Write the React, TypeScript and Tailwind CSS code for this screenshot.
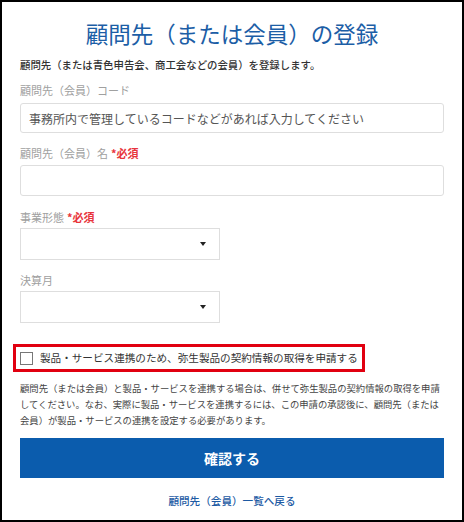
import { useState } from 'react';

const FONT = { fontFamily: '"Noto Sans CJK JP", "Noto Sans", sans-serif' };

function Label({ text, required, className }: { text: string; required?: boolean; className: string }) {
  return (
    <div className={`text-[11px] leading-[14px] text-[#a0a0a0] ${className}`}>
      {text}
      {required && <span className="ml-[3px] font-bold text-[#e8343c]">*必須</span>}
    </div>
  );
}

function SelectBox({ className }: { className: string }) {
  return (
    <div className={`flex h-[32px] w-[200px] items-center justify-end border border-[#dedede] bg-white pr-[13px] ${className}`}>
      <span className="h-0 w-0 border-x-[3px] border-t-[4px] border-x-transparent border-t-[#222]" />
    </div>
  );
}

export default function App() {
  const [apply, setApply] = useState(false);

  return (
    <div className="h-[522px] w-[464px] border-2 border-black bg-white" style={FONT}>
      <div className="flex flex-col px-[18px] pt-[16px]">
        <h1 className="text-center text-[22.5px] leading-[30px] text-[#1c5ea6]">顧問先（または会員）の登録</h1>
        <p className="mt-[10px] text-[10.4px] font-medium leading-[14px] text-[#333]">
          顧問先（または青色申告会、商工会などの会員）を登録します。
        </p>

        <Label text="顧問先（会員）コード" className="mt-[11px]" />
        <input
          type="text"
          placeholder="事務所内で管理しているコードなどがあれば入力してください"
          className="mt-[6px] h-[30px] w-full rounded-[3px] border border-[#dedede] px-[8px] text-[12px] outline-none placeholder:text-[#555]"
        />

        <Label text="顧問先（会員）名" required className="mt-[13px]" />
        <input
          type="text"
          className="mt-[5px] h-[31px] w-full rounded-[3px] border border-[#dedede] px-[8px] text-[12px] outline-none"
        />

        <Label text="事業形態" required className="mt-[14px]" />
        <SelectBox className="mt-[4px]" />

        <Label text="決算月" className="mt-[13px]" />
        <SelectBox className="mt-[4px]" />

        <label className="-ml-[7px] mt-[21px] flex h-[28px] w-[352px] cursor-pointer items-center gap-[7px] border-[3px] border-[#e10010] pl-[4px]">
          <span
            onClick={() => setApply(!apply)}
            className={`h-[13px] w-[13px] shrink-0 border border-[#777] ${apply ? 'bg-[#0b5cad]' : 'bg-white'}`}
          />
          <span className="text-[10.6px] leading-[14px] text-[#333]">製品・サービス連携のため、弥生製品の契約情報の取得を申請する</span>
        </label>

        <p className="mt-[8px] text-[9.33px] leading-[16px] text-[#444]">
          顧問先（または会員）と製品・サービスを連携する場合は、併せて弥生製品の契約情報の取得を申請してください。なお、実際に製品・サービスを連携するには、この申請の承認後に、顧問先（または会員）が製品・サービスの連携を設定する必要があります。
        </p>

        <button type="button" className="mt-[10px] h-[40px] w-full bg-[#0b5cad] text-[14px] font-bold text-white">
          確認する
        </button>

        <a href="#" className="mt-[16px] text-center text-[10.6px] font-medium leading-[14px] text-[#1c5aa3]">
          顧問先（会員）一覧へ戻る
        </a>
      </div>
    </div>
  );
}
